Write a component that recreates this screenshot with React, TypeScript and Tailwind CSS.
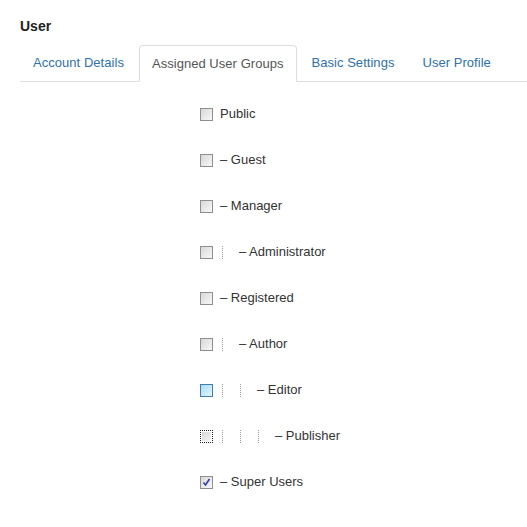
import React from 'react';

type Group = {
  name: string;
  level: number;
  dash: boolean;
  state?: 'hover' | 'focus' | 'checked';
};

const groups: Group[] = [
  { name: 'Public', level: 0, dash: false },
  { name: 'Guest', level: 0, dash: true },
  { name: 'Manager', level: 0, dash: true },
  { name: 'Administrator', level: 1, dash: true },
  { name: 'Registered', level: 0, dash: true },
  { name: 'Author', level: 1, dash: true },
  { name: 'Editor', level: 2, dash: true, state: 'hover' },
  { name: 'Publisher', level: 3, dash: true, state: 'focus' },
  { name: 'Super Users', level: 0, dash: true, state: 'checked' },
];

const Checkbox = ({ state }: { state?: Group['state'] }) => {
  if (state === 'hover') {
    return (
      <span className="w-[13px] h-[13px] border border-[#3c7fb1] bg-gradient-to-br from-[#a9dcf6] to-[#e6f5fd] shrink-0" />
    );
  }
  if (state === 'focus') {
    return (
      <span className="w-[13px] h-[13px] border border-dotted border-[#222] p-px shrink-0 flex">
        <span className="flex-1 bg-gradient-to-br from-[#d6d6d6] to-[#f6f6f6]" />
      </span>
    );
  }
  return (
    <span className="w-[13px] h-[13px] border border-[#8f8f8f] bg-gradient-to-br from-[#d8d8d8] to-[#f8f8f8] shrink-0 flex items-center justify-center">
      {state === 'checked' && (
        <svg width="9" height="9" viewBox="0 0 9 9">
          <path d="M1.5 4.5 L3.5 7 L7.5 1" fill="none" stroke="#2f3fae" strokeWidth="1.6" />
        </svg>
      )}
    </span>
  );
};

const App = () => {
  const tabs = ['Account Details', 'Assigned User Groups', 'Basic Settings', 'User Profile'];
  return (
    <div className="w-[527px] h-[527px] bg-white overflow-hidden font-['Liberation_Sans',Arial,sans-serif] text-[13px] text-[#333]">
      <div className="pl-5 pt-[18px]">
        <h2 className="text-[14px] font-bold leading-4 text-[#222]">User</h2>
        <ul className="flex mt-[11px] border-b border-[#ddd] tracking-[0.04px]">
          {tabs.map((t, i) => (
            <li
              key={t}
              className={
                i === 1
                  ? 'mr-[2px] -mb-px px-3 pt-[9px] pb-[8px] leading-[18px] border border-[#ddd] border-b-white rounded-t bg-white text-[#555]'
                  : 'mr-[2px] px-[13px] pt-[9px] pb-[8px] leading-[18px] text-[#3071a9]'
              }
            >
              {t}
            </li>
          ))}
        </ul>
        <div className="pl-[180px] pt-[23px] flex flex-col gap-[28px]">
          {groups.map((g) => (
            <label key={g.name} className="flex items-center h-[18px]">
              <Checkbox state={g.state} />
              <span className="flex items-center ml-[7px]">
                {Array.from({ length: g.level }).map((_, i) => (
                  <span key={i} className="w-[18px] h-[13px] flex">
                    <span className="ml-[2px] h-full border-l border-dotted border-[#999]" />
                  </span>
                ))}
                <span className={g.level > 0 ? 'ml-px' : ''}>{g.dash ? '\u2013 ' + g.name : g.name}</span>
              </span>
            </label>
          ))}
        </div>
      </div>
    </div>
  );
};

export default App;
